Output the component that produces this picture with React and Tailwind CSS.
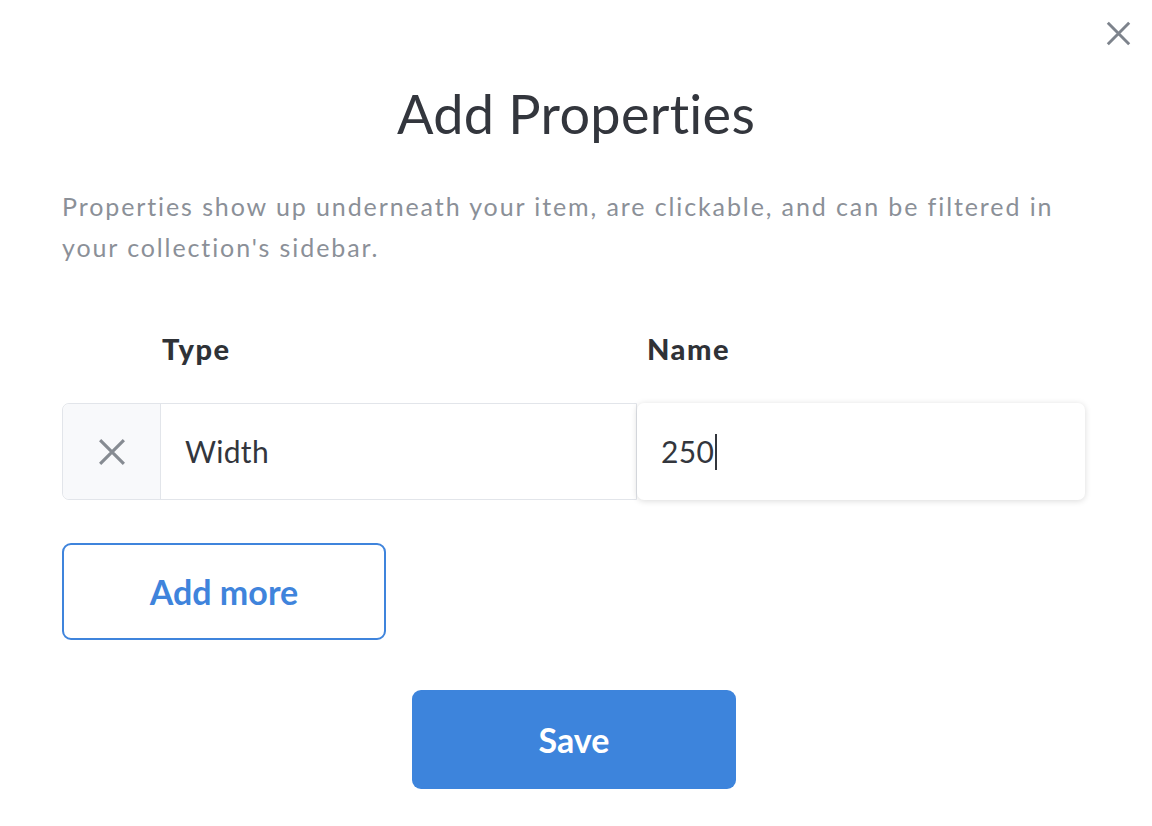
import React from "react";

function XIcon({ className, sw = 2.4 }) {
  return (
    <svg viewBox="0 0 24 24" className={className} fill="none" stroke="currentColor" strokeWidth={sw} strokeLinecap="butt">
      <path d="M2.5 2.5L21.5 21.5M21.5 2.5L2.5 21.5" />
    </svg>
  );
}

export default function App() {
  return (
    <div className="relative w-[1152px] h-[826px] bg-white overflow-hidden" style={{ fontFamily: "Lato, 'Open Sans', sans-serif" }}>
      <button className="absolute left-[1105px] top-[20px] w-[27px] h-[27px] text-[#7d838c]">
        <XIcon className="w-[27px] h-[27px]" sw={2.6} />
      </button>
      <div className="flex flex-col px-[62px]">
        <h1 className="mt-[82px] h-[64px] text-center text-[54px] leading-[64px] text-[#33363d] font-normal tracking-[0.3px]">Add Properties</h1>
        <p className="mt-[40px] w-[1000px] text-[25px] leading-[41px] text-[#8b9098] tracking-[1.9px]">
          Properties show up underneath your item, are clickable, and can be filtered in your collection's sidebar.
        </p>
        <div className="mt-[64px] flex h-[34px] items-center text-[29px] leading-[34px] font-black text-[#2f3237] tracking-[1.5px]">
          <span className="ml-[100px] w-[485px]">Type</span>
          <span>Name</span>
        </div>
        <div className="mt-[37px] flex h-[97px] w-[1023px]">
          <div className="flex flex-1 rounded-l-[7px] border border-[#e2e5ea]">
            <div className="flex w-[98px] items-center justify-center rounded-l-[7px] border-r border-[#e2e5ea] bg-[#f8f9fb] text-[#868b92]">
              <XIcon className="w-[30px] h-[30px]" sw={2.5} />
            </div>
            <div className="flex flex-1 items-center pl-[24px] text-[30px] text-[#33363d] tracking-[0.3px]">Width</div>
          </div>
          <div className="flex w-[448px] items-center rounded-[7px] bg-white pl-[24px] text-[30px] text-[#33363d] tracking-[0.3px] shadow-[0_1px_6px_rgba(0,0,0,0.15)]">
            250<span className="ml-[1px] inline-block h-[36px] w-[2px] bg-[#33363d]" />
          </div>
        </div>
        <button className="mt-[43px] h-[97px] w-[324px] rounded-[9px] border-2 border-[#3f84dc] text-[34px] font-bold text-[#3f84dc]">Add more</button>
        <button className="mt-[50px] self-center ml-[-4px] h-[99px] w-[324px] rounded-[9px] bg-[#3d84dc] text-[34px] font-bold text-white">Save</button>
      </div>
    </div>
  );
}
